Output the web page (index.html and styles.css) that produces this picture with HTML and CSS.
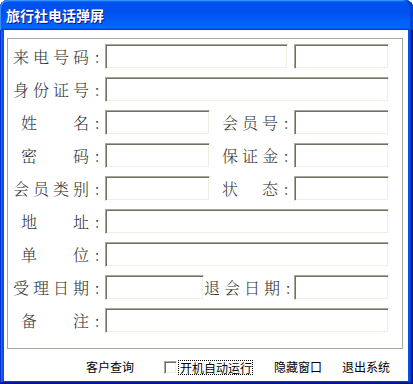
FILE: index.html
```html
<!DOCTYPE html>
<html lang="zh-CN">
<head>
  <meta charset="UTF-8">
  <title>旅行社电话弹屏</title>
  <link rel="stylesheet" href="styles.css">
</head>
<body>
  <!-- XP style window -->
  <div class="window">
    <div class="title-bar">
      <span class="title">旅行社电话弹屏</span>
    </div>

    <div class="client">
      <!-- customer info fields -->
      <div class="box">
        <div class="row">
          <label class="lb">来电号码<i>:</i></label>
          <input type="text" class="tb w183">
          <input type="text" class="tb w95 ml6">
        </div>
        <div class="row">
          <label class="lb">身份证号<i>:</i></label>
          <input type="text" class="tb full">
        </div>
        <div class="row">
          <label class="lb"><span class="w2">姓</span>名<i>:</i></label>
          <input type="text" class="tb w105">
          <label class="rl w84">会员号<i>:</i></label>
          <input type="text" class="tb w95">
        </div>
        <div class="row">
          <label class="lb"><span class="w2">密</span>码<i>:</i></label>
          <input type="text" class="tb w105">
          <label class="rl w84">保证金<i>:</i></label>
          <input type="text" class="tb w95">
        </div>
        <div class="row">
          <label class="lb">会员类别<i>:</i></label>
          <input type="text" class="tb w105">
          <label class="rl w84">状　态<i>:</i></label>
          <input type="text" class="tb w95">
        </div>
        <div class="row">
          <label class="lb"><span class="w2">地</span>址<i>:</i></label>
          <input type="text" class="tb full">
        </div>
        <div class="row">
          <label class="lb"><span class="w2">单</span>位<i>:</i></label>
          <input type="text" class="tb full">
        </div>
        <div class="row">
          <label class="lb">受理日期<i>:</i></label>
          <input type="text" class="tb w99">
          <label class="rl w90">退会日期<i>:</i></label>
          <input type="text" class="tb w95">
        </div>
        <div class="row">
          <label class="lb"><span class="w2">备</span>注<i>:</i></label>
          <input type="text" class="tb full">
        </div>
      </div>

      <!-- bottom commands -->
      <div class="bar">
        <span class="cmd">客户查询</span>
        <span class="chk"></span>
        <span class="chk-label">开机自动运行</span>
        <span class="cmd hide">隐藏窗口</span>
        <span class="cmd quit">退出系统</span>
      </div>
    </div>
  </div>
</body>
</html>
```

FILE: styles.css
```css
/* Window frame, XP Luna look */
body {
  margin: 0;
  background: #fff;
  font-family: "Noto Sans CJK SC", sans-serif;
}
.window {
  width: 413px;
  height: 384px;
  box-sizing: border-box;
  display: flex;
  flex-direction: column;
  background: #0054e3;
  border-radius: 8px 8px 0 0;
  padding: 0 5px 3px 4px;
  box-shadow: inset -1px -1px #00138c, inset 1px 0 #0831d9, inset -2px -2px #001ea0, inset 2px 0 #166aee, inset -3px -3px #003bda, inset 3px 0 #0855dd;
}
.title-bar {
  height: 30px;
  margin: 0 -5px 0 -4px;
  display: flex;
  align-items: center;
  padding-left: 6px;
  border-radius: 8px 8px 0 0;
  background: linear-gradient(180deg, #0997ff, #0053ee 8%, #0050ee 40%, #0066ff 88%, #0066ff 93%, #005bff 95%, #003dd7 96%, #003dd7);
  box-shadow: inset -3px 0 #0040d0, inset 1px 1px #3c8cf8;
}
.title {
  color: #fff;
  font-size: 14px;
  font-weight: bold;
  letter-spacing: 0;
  text-shadow: 1px 1px #0f1089;
}
.client {
  flex: 1;
  background: #fff;
  padding: 8px 5px 0 3px;
}

/* Field group */
.box {
  width: 396px;
  height: 311px;
  box-sizing: border-box;
  border: 1px solid #aca899;
  padding: 5px 0 0 5px;
}
.row {
  display: flex;
  align-items: center;
  height: 25px;
  margin-bottom: 8px;
}
.lb, .rl {
  font-family: "Noto Serif CJK SC", "Noto Sans CJK SC", serif;
  font-size: 16px;
  font-weight: 300;
  color: #333;
  letter-spacing: 4px;
  line-height: 25px;
  white-space: nowrap;
}
.lb {
  width: 92px;
  flex: none;
}
.rl {
  flex: none;
  text-align: right;
  padding-right: 4px;
  box-sizing: border-box;
}
.lb i, .rl i {
  display: inline-block;
  width: 8px;
  font-style: normal;
  text-align: center;
  letter-spacing: 0;
}
.w2 {
  display: inline-block;
  width: 52px;
  padding-left: 8px;
}
.w84 { width: 84px; }
.w90 { width: 90px; }

.tb {
  flex: none;
  height: 25px;
  box-sizing: border-box;
  margin: 0;
  padding: 0;
  border: 1px solid;
  border-color: #aca899 #fff #fff #aca899;
  box-shadow: inset 1px 1px #716f64, inset -1px -1px #f1efe2;
  background: #fff;
  outline: none;
}
.full { width: 284px; }
.w183 { width: 183px; }
.w105 { width: 105px; }
.w99 { width: 99px; }
.w95 { width: 95px; }
.ml6 { margin-left: 6px; }

/* Bottom command bar */
.bar {
  display: flex;
  align-items: center;
  height: 32px;
  padding: 4px 0 0 79px;
  box-sizing: border-box;
  font-size: 12px;
  color: #000;
}
.cmd {
  line-height: 14px;
}
.chk {
  width: 13px;
  height: 13px;
  box-sizing: border-box;
  margin-left: 30px;
  border: 1px solid;
  border-color: #aca899 #fff #fff #aca899;
  box-shadow: inset 1px 1px #716f64, inset -1px -1px #f1efe2;
  background: #fff;
}
.chk-label {
  margin-left: 2px;
  padding: 0 0 0 1px;
  line-height: 13px;
  outline: 1px dotted #000;
}
.hide {
  margin-left: 22px;
}
.quit {
  margin-left: 20px;
}
```
